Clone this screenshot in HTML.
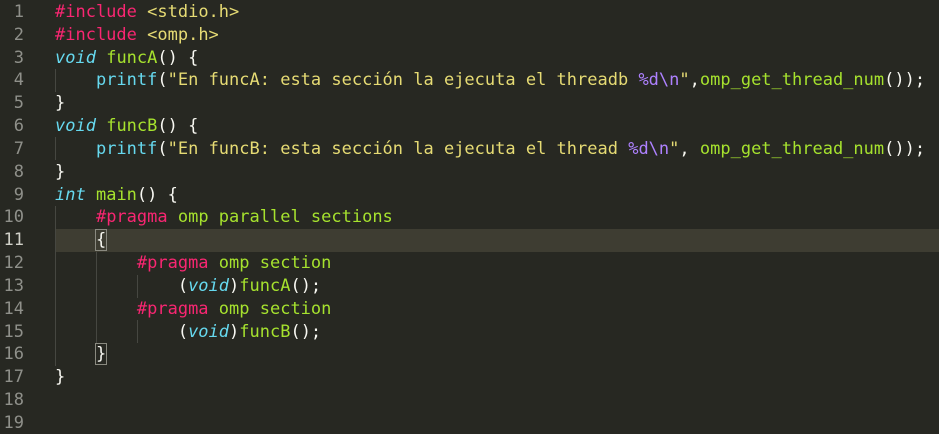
<!DOCTYPE html>
<html><head><meta charset="utf-8"><style>
html,body{margin:0;padding:0;background:#272822;width:939px;height:434px;overflow:hidden}
body{position:relative;font-family:"DejaVu Sans Mono","Liberation Mono",monospace;font-size:17px}
.ln{position:absolute;left:0;width:24px;text-align:right;top:1px;color:#8f908a;line-height:22.83px;white-space:pre}
.code{position:absolute;left:55px;top:1px;color:#f8f8f2;line-height:22.83px;white-space:pre}
.hl{position:absolute;left:55px;right:0;top:229px;height:23px;background:#3e3d32}
.g{position:absolute;width:1px;background:#464741}
.p{color:#f92672}.y{color:#e6db74}.gr{color:#a6e22e}.c{color:#66d9ef}.i{color:#66d9ef;font-style:italic}.v{color:#ae81ff}
.b{outline:1px solid #8a8a80;outline-offset:0}
</style></head><body>
<div class="hl"></div>
<div class="g" style="left:55px;top:69px;height:23px"></div>
<div class="g" style="left:55px;top:137px;height:23px"></div>
<div class="g" style="left:55px;top:206px;height:160px"></div>
<div class="g" style="left:96px;top:252px;height:92px"></div>
<div class="g" style="left:137px;top:275px;height:23px"></div>
<div class="g" style="left:137px;top:320px;height:23px"></div>
<div class="ln">1
2
3
4
5
6
7
8
9
10
<span style="color:#d0d0c8">11</span>
12
13
14
15
16
17
18
19</div>
<div class="code"><span class="p">#include</span> <span class="y">&lt;stdio.h&gt;</span>
<span class="p">#include</span> <span class="y">&lt;omp.h&gt;</span>
<span class="i">void</span> <span class="gr">funcA</span>() {
    <span class="c">printf</span>(<span class="y">"En funcA: esta sección la ejecuta el threadb </span><span class="v">%d\n</span><span class="y">"</span>,<span class="gr">omp_get_thread_num</span>());
}
<span class="i">void</span> <span class="gr">funcB</span>() {
    <span class="c">printf</span>(<span class="y">"En funcB: esta sección la ejecuta el thread </span><span class="v">%d\n</span><span class="y">"</span>, <span class="gr">omp_get_thread_num</span>());
}
<span class="i">int</span> <span class="gr">main</span>() {
    <span class="p">#pragma</span> <span class="gr">omp parallel sections</span>
    <span class="b">{</span>
        <span class="p">#pragma</span> <span class="gr">omp section</span>
            (<span class="i">void</span>)<span class="gr">funcA</span>();
        <span class="p">#pragma</span> <span class="gr">omp section</span>
            (<span class="i">void</span>)<span class="gr">funcB</span>();
    <span class="b">}</span>
}
</div>
</body></html>
